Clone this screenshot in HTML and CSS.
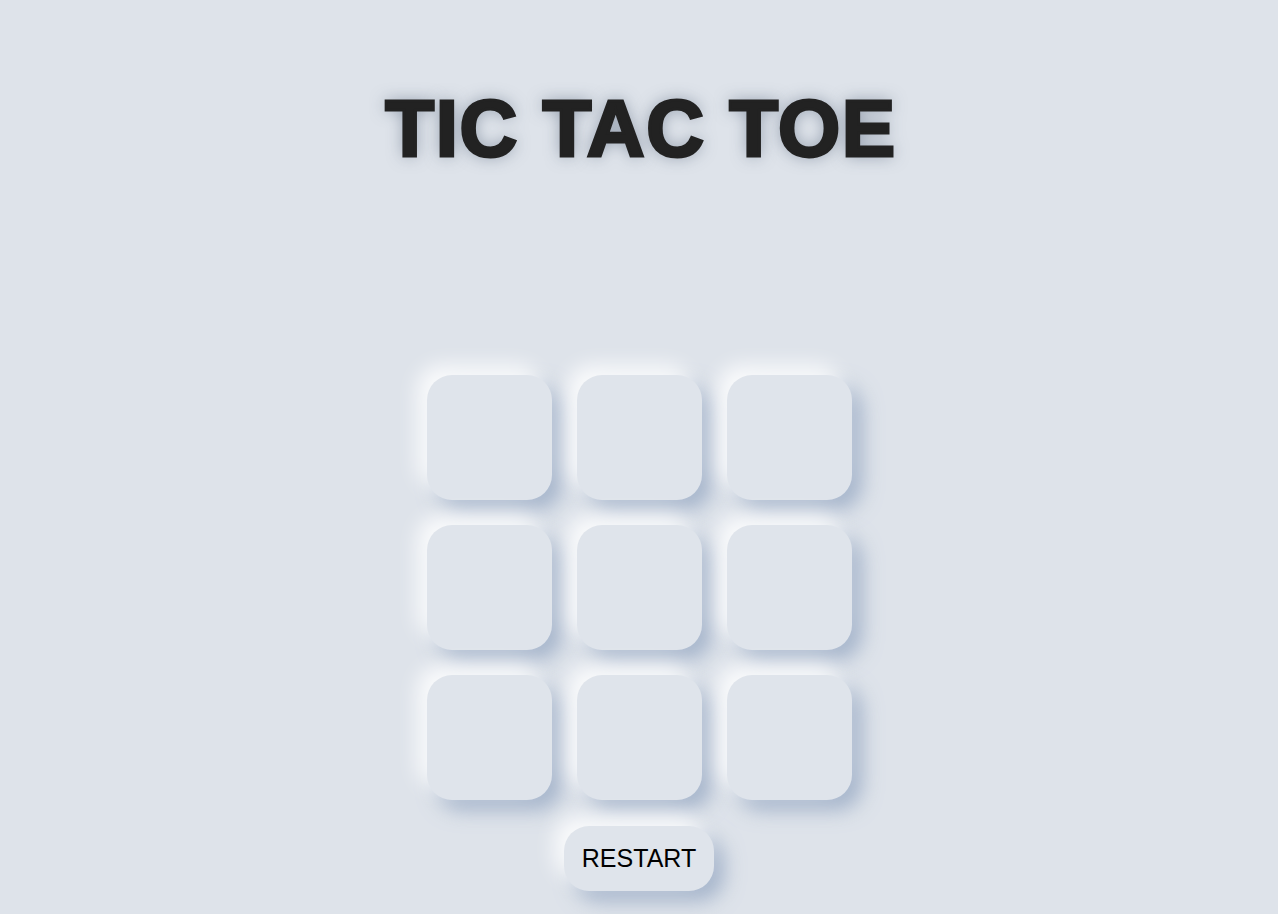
FILE: index.html
```html
<!DOCTYPE html>
<html>
<head>
<meta charset="utf-8">
<link rel="stylesheet" href="styles.css">
<title>Tic Tac Toe</title>
</head>
<body>
<main class="page">
  <h1 class="title">TIC TAC TOE</h1>
  <div class="board">
    <div class="cell"></div><div class="cell"></div><div class="cell"></div>
    <div class="cell"></div><div class="cell"></div><div class="cell"></div>
    <div class="cell"></div><div class="cell"></div><div class="cell"></div>
  </div>
  <button class="restart">RESTART</button>
</main>
</body>
</html>
```
FILE: styles.css
```css
html, body {
  margin: 0;
  padding: 0;
  background: #dee3ea;
  height: 100%;
  overflow: hidden;
}
.page {
  display: flex;
  flex-direction: column;
  align-items: center;
  font-family: "Liberation Sans", Arial, sans-serif;
}
.title {
  margin: 84px 0 0 4px;
  font-size: 80px;
  font-weight: 900;
  line-height: 90px;
  color: #222222;
  letter-spacing: 1.5px;
  -webkit-text-stroke: 3px #222222;
  text-shadow: 0 0 16px rgba(70, 85, 110, 0.55);
}
.board {
  margin-top: 201px;
  display: grid;
  grid-template-columns: repeat(3, 125px);
  grid-auto-rows: 125px;
  gap: 25px;
}
.cell {
  background: #dfe4eb;
  border-radius: 25px;
  box-shadow: -10px -10px 20px rgba(255, 255, 255, 0.85),
              10px 10px 20px rgba(140, 160, 190, 0.7);
}
.restart {
  margin-top: 26px;
  width: 150px;
  height: 65px;
  border: none;
  border-radius: 25px;
  background: #dfe4eb;
  font-family: "Liberation Sans", Arial, sans-serif;
  font-size: 25px;
  color: #000;
  box-shadow: -10px -10px 20px rgba(255, 255, 255, 0.85),
              10px 10px 20px rgba(140, 160, 190, 0.7);
  padding: 0;
}
```
